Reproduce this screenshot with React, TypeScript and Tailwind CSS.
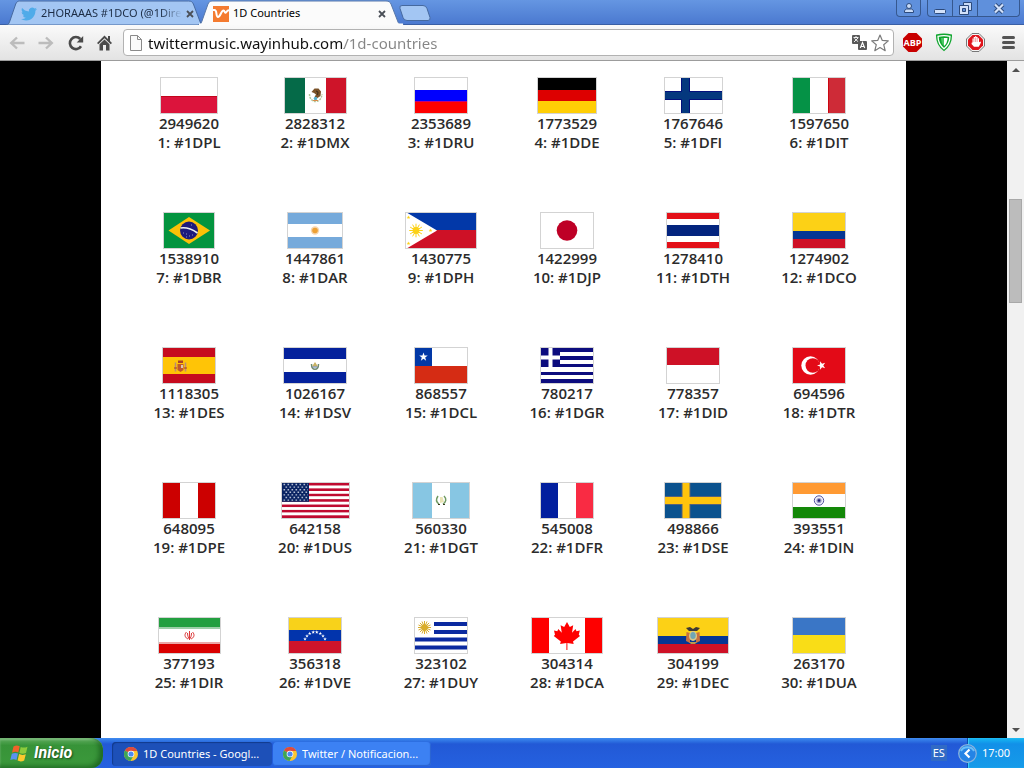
import { useState, type ReactNode } from "react"

interface Country {
  code: string
  votes: number
  width: number
  art: ReactNode
}

interface BandsProps {
  w: number
  colors: string[]
  sizes?: number[]
}

// Franjas horizontales
function Rows({ w, colors, sizes }: BandsProps) {
  const parts = sizes ?? colors.map(() => 35 / colors.length)
  let y = 0
  return (
    <>
      {colors.map((color, i) => {
        const top = y
        y += parts[i]
        return <rect key={i} x="0" y={top} width={w} height={parts[i]} fill={color} />
      })}
    </>
  )
}

// Franjas verticales
function Cols({ w, colors, sizes }: BandsProps) {
  const parts = sizes ?? colors.map(() => w / colors.length)
  let x = 0
  return (
    <>
      {colors.map((color, i) => {
        const left = x
        x += parts[i]
        return <rect key={i} x={left} y="0" width={parts[i]} height="35" fill={color} />
      })}
    </>
  )
}

function Star({ x, y, r, fill = "#fff", turn = 0 }: { x: number; y: number; r: number; fill?: string; turn?: number }) {
  const points = Array.from({ length: 10 }, (_, i) => {
    const radius = i % 2 === 0 ? r : r * 0.4
    const angle = (Math.PI * i) / 5 - Math.PI / 2 + turn
    return `${(x + radius * Math.cos(angle)).toFixed(2)},${(y + radius * Math.sin(angle)).toFixed(2)}`
  }).join(" ")
  return <polygon points={points} fill={fill} />
}

function Sun({ x, y, r, rays, fill }: { x: number; y: number; r: number; rays: number; fill: string }) {
  return (
    <g stroke={fill} fill={fill}>
      {Array.from({ length: rays }, (_, i) => {
        const a = (Math.PI * 2 * i) / rays
        return (
          <line
            key={i}
            x1={x}
            y1={y}
            x2={(x + r * Math.cos(a)).toFixed(2)}
            y2={(y + r * Math.sin(a)).toFixed(2)}
            strokeWidth="1"
          />
        )
      })}
      <circle cx={x} cy={y} r={r * 0.5} stroke="none" />
    </g>
  )
}

const countries: Country[] = [
  { code: "PL", votes: 2949620, width: 58, art: <><Rows w={56} colors={["#fff", "#dc143c"]} sizes={[18, 17]} /><rect y="18" width="56" height="1" fill="#c4051c" /></> },
  {
    code: "MX", votes: 2828312, width: 63,
    art: (
      <>
        <Cols w={61} colors={["#056a48", "#fff", "#ce1429"]} sizes={[20, 21, 20]} />
        <path d="M24.500 16c0 10 12 10 12.500 0" fill="none" stroke="#b3c79a" strokeWidth="1.500" strokeDasharray="2 1" />
        <path d="M26.500 14l3-3.500 4 0 2.500 3-.5 4.500-3 2-3-1 1.500-2.500-2-1.500z" fill="#7a5228" />
        <path d="M31 13l2 1-.5 3" stroke="#3c2a18" fill="none" />
        <circle cx="30.500" cy="20.500" r="1.800" fill="#58aecb" />
        <path d="M28 22.500h5" stroke="#d98a4a" />
      </>
    ),
  },
  { code: "RU", votes: 2353689, width: 54, art: <><Rows w={52} colors={["#fff", "#0000fe", "#fe0000"]} sizes={[12, 11, 12]} /><rect y="23" width="52" height="1" fill="#c0007c" /></> },
  { code: "DE", votes: 1773529, width: 60, art: <Rows w={58} colors={["#000", "#dd0000", "#ffce05"]} sizes={[12, 11, 12]} /> },
  {
    code: "FI", votes: 1767646, width: 59,
    art: (
      <>
        <rect width="57" height="35" fill="#fff" />
        <path d="M0 17.500h57M20.500 0v35" stroke="#03037c" strokeWidth="9" />
        <path d="M0 17.500h57M20.500 0v35" stroke="#04387e" strokeWidth="7.500" />
      </>
    ),
  },
  { code: "IT", votes: 1597650, width: 54, art: <><Cols w={52} colors={["#059246", "#fff", "#ce2b37"]} sizes={[17, 18, 17]} /><rect x="35" width="1" height="35" fill="#cc0610" /></> },
  {
    code: "BR", votes: 1538910, width: 52,
    art: (
      <>
        <rect width="50" height="35" fill="#03943f" />
        <path d="M4.500 17.500L25 4l21 13.500L25 31z" fill="#fcc107" />
        <circle cx="25" cy="17.500" r="9" fill="#1d1a7c" />
        <path d="M16.500 15c6-1 12 1.500 17 5" fill="none" stroke="#eef2f2" strokeWidth="1.600" />
        <path d="M19 20h1M22 21h1M25 23h1M28 22h1M22 24h1M27 12h1" stroke="#8f91bd" />
      </>
    ),
  },
  { code: "AR", votes: 1447861, width: 56, art: <><Rows w={54} colors={["#76aadb", "#fff", "#76aadb"]} sizes={[11, 13, 11]} /><circle cx="27" cy="17.500" r="4.200" fill="#f6d6b0" /><circle cx="27" cy="17.500" r="2.800" fill="#eda136" /></> },
  {
    code: "PH", votes: 1430775, width: 72,
    art: (
      <>
        <Rows w={70} colors={["#0238a8", "#ce1126"]} sizes={[17, 18]} />
        <path d="M0 0h1.500L31 17.500 1.500 35H0z" fill="#fff" />
        <Sun x={10} y={17.5} r={6.8} rays={12} fill="#fcd116" />
        <Star x={2.5} y={4.5} r={2} fill="#fcd116" />
        <Star x={2.5} y={30.5} r={2} fill="#fcd116" />
        <Star x={24.5} y={17.5} r={2} fill="#fcd116" />
      </>
    ),
  },
  { code: "JP", votes: 1422999, width: 54, art: <><rect width="52" height="35" fill="#fff" /><circle cx="26" cy="17.500" r="10.300" fill="#be0026" /></> },
  { code: "TH", votes: 1278410, width: 54, art: <Rows w={52} colors={["#e31018", "#fff", "#03247e", "#fff", "#e31018"]} sizes={[6, 6, 11, 6, 6]} /> },
  { code: "CO", votes: 1274902, width: 54, art: <Rows w={52} colors={["#fcd116", "#053693", "#ce1126"]} sizes={[18, 8, 9]} /> },
  {
    code: "ES", votes: 1118305, width: 54,
    art: (
      <>
        <Rows w={52} colors={["#c60b1e", "#ffc406", "#c60b1e"]} sizes={[9, 17, 9]} />
        <path d="M12.500 14.500v9M22.500 14.500v9" stroke="#b98a78" strokeWidth="1.500" />
        <path d="M14.500 16h6v6l-3 2-3-2z" fill="#c0572c" />
        <path d="M15 12.500h5V15h-5z" fill="#a8402b" />
        <path d="M18 17h2v3h-2z" fill="#d9c6b8" />
        <path d="M11 20h3M21 20h3" stroke="#ad3a22" />
      </>
    ),
  },
  {
    code: "SV", votes: 1026167, width: 64,
    art: (
      <>
        <Rows w={62} colors={["#04219c", "#fff", "#04219c"]} sizes={[11, 13, 11]} />
        <path d="M27.500 16c0 7 7 7 7 0" fill="none" stroke="#6f8c72" strokeWidth="1.500" />
        <path d="M31 14l3 4.500h-6z" fill="#c9b264" />
        <path d="M28.500 19h5" stroke="#5976a6" />
      </>
    ),
  },
  { code: "CL", votes: 868557, width: 54, art: <><Rows w={52} colors={["#fff", "#d52c14"]} sizes={[18, 17]} /><rect width="17" height="18" fill="#0238a6" /><Star x={8.5} y={9} r={4.5} /></> },
  {
    code: "GR", votes: 780217, width: 54,
    art: (
      <>
        <Rows w={52} colors={["#0c0c7e", "#fff", "#0c0c7e", "#fff", "#0c0c7e", "#fff", "#0c0c7e", "#fff", "#0c0c7e"]} sizes={[4, 4, 4, 4, 3, 5, 3, 4, 4]} />
        <rect width="19" height="19" fill="#0c0c7e" />
        <path d="M0 9.500h19M9.500 0v19" stroke="#fff" strokeWidth="4" />
      </>
    ),
  },
  { code: "ID", votes: 778357, width: 54, art: <Rows w={52} colors={["#ce1126", "#fff"]} sizes={[17, 18]} /> },
  {
    code: "TR", votes: 694596, width: 54,
    art: (
      <>
        <rect width="52" height="35" fill="#e30a17" />
        <circle cx="17.500" cy="17.500" r="9.200" fill="#fff" />
        <circle cx="19.800" cy="17.500" r="7.300" fill="#e30a17" />
        <Star x={28.5} y={17.5} r={4.5} turn={-Math.PI / 10} />
      </>
    ),
  },
  { code: "PE", votes: 648095, width: 54, art: <Cols w={52} colors={["#cc0000", "#fff", "#cc0000"]} sizes={[17, 18, 17]} /> },
  {
    code: "US", votes: 642158, width: 69,
    art: (
      <>
        <Rows w={67} colors={Array.from({ length: 13 }, (_, i) => (i % 2 === 0 ? "#bf0a30" : "#fff"))} />
        <rect width="27" height="18.800" fill="#0a2463" />
        {Array.from({ length: 7 }, (_, row) => (
          <path
            key={row}
            d={`M${row % 2 === 0 ? 1.5 : 3.5} ${1.5 + row * 2.6}H26`}
            stroke="#b4bdd3"
            strokeWidth="1.400"
            strokeDasharray="1.600 2.400"
          />
        ))}
      </>
    ),
  },
  {
    code: "GT", votes: 560330, width: 58,
    art: (
      <>
        <Cols w={56} colors={["#87c6e3", "#fff", "#87c6e3"]} sizes={[19, 18, 19]} />
        <path d="M25 13c-2 3-2 6 1 8M31 13c3 3 2 6-1 8" fill="none" stroke="#6f9a62" strokeWidth="1.500" />
        <path d="M27 14h2.500l1.500 5-4 1z" fill="#e9e3b4" />
        <path d="M25 21.500h2M30 21.500h2" stroke="#3a3a20" />
      </>
    ),
  },
  { code: "FR", votes: 545008, width: 54, art: <Cols w={52} colors={["#021f9e", "#fff", "#f92b43"]} sizes={[17, 18, 17]} /> },
  {
    code: "SE", votes: 498866, width: 58,
    art: (
      <>
        <rect width="56" height="35" fill="#0b528e" />
        <path d="M0 17.500h56M21 0v35" stroke="#55617a" strokeWidth="9" />
        <path d="M0 17.500h56M21 0v35" stroke="#ffc40c" strokeWidth="7" />
      </>
    ),
  },
  {
    code: "IN", votes: 393551, width: 54,
    art: (
      <>
        <Rows w={52} colors={["#ff9a33", "#fff", "#138808"]} sizes={[11, 13, 11]} />
        <circle cx="26" cy="17.500" r="4.700" fill="#eeeef8" stroke="#5656a0" />
        <circle cx="26" cy="17.500" r="2.600" fill="#9a9ac6" />
        <circle cx="26" cy="17.500" r="1.300" fill="#1c1c70" />
      </>
    ),
  },
  {
    code: "IR", votes: 377193, width: 63,
    art: (
      <>
        <Rows w={61} colors={["#239f40", "#9dcfa8", "#fff", "#eba7a7", "#da0000"]} sizes={[9, 2, 13, 2, 9]} />
        <path d="M27.500 14c-3 3-1 6 1.500 7M33.500 14c3 3 1 6-1.500 7M28.500 15c0 3 1 5 2 6.500 1-1.500 2-3.500 2-6.500M30.500 13v9" fill="none" stroke="#dc3a3a" strokeWidth="1" />
      </>
    ),
  },
  {
    code: "VE", votes: 356318, width: 54,
    art: (
      <>
        <Rows w={52} colors={["#f8d21a", "#0234ac", "#cf142b"]} sizes={[12, 11, 12]} />
        {[[16, 21], [18, 18], [20.7, 15.5], [24.2, 14.2], [27.8, 14.2], [31.3, 15.5], [34, 18], [36, 21]].map(([x, y]) => (
          <Star key={x} x={x} y={y} r={1.9} />
        ))}
      </>
    ),
  },
  {
    code: "UY", votes: 323102, width: 54,
    art: (
      <>
        <rect width="52" height="35" fill="#fff" />
        <path d="M19 6h33M19 14h33M0 21.500h52M0 29.500h52" stroke="#0b2aa0" strokeWidth="4" />
        <Sun x={9.5} y={9.5} r={6.5} rays={16} fill="#d9ad2c" />
      </>
    ),
  },
  {
    code: "CA", votes: 304314, width: 72,
    art: (
      <>
        <Cols w={70} colors={["#fe0000", "#fff", "#fe0000"]} sizes={[17, 36, 17]} />
        <path d="M35 4l2.800 5 3.400-1.700-1.200 7.500 3.500-3.800 1 2.200 3.300-.7-1 4.200 1.200 1.200-7 5.600.7 2.500-6.300-.9V32h-1v-6.900l-6.300.9.700-2.500-7-5.600 1.200-1.200-1-4.200 3.300.7 1-2.200 3.500 3.800-1.200-7.500L32.200 9z" fill="#fe0000" />
      </>
    ),
  },
  {
    code: "EC", votes: 304199, width: 72,
    art: (
      <>
        <Rows w={70} colors={["#fcd116", "#053693", "#ce1126"]} sizes={[18, 8, 9]} />
        <path d="M28 10l4-1 3 2 3-2 4 1-3 3h-8z" fill="#3d3934" />
        <path d="M28.500 14l3.500 1v10l-4-2zM41.500 14L38 15v10l4-2z" fill="#c9713f" />
        <ellipse cx="35" cy="18" rx="4" ry="5" fill="#d9c98a" />
        <ellipse cx="35" cy="17.500" rx="2.700" ry="3.600" fill="#6fa6b6" />
        <path d="M31 24h8l-2 2h-4z" fill="#b99b50" />
      </>
    ),
  },
  { code: "UA", votes: 263170, width: 54, art: <Rows w={52} colors={["#3a76c6", "#f9dd17"]} sizes={[17, 18]} /> },
]

function Flag({ code, width, children }: { code: string; width: number; children: ReactNode }) {
  return (
    <svg
      role="img"
      aria-label={code}
      width={width}
      height="37"
      viewBox={`0 0 ${width - 2} 35`}
      className="border border-[#d3d3d3]"
    >
      {children}
    </svg>
  )
}

function ChromeIcon() {
  return (
    <svg width="14" height="14" viewBox="0 0 14 14" className="shrink-0" aria-hidden="true">
      <circle cx="7" cy="7" r="7" fill="#fbc531" />
      <path d="M7 7L1 3.400A7 7 0 0 1 13.200 4H7z" fill="#dd4b3e" />
      <path d="M7 7L1 3.400A7 7 0 0 0 6.500 14L9.500 8.500z" fill="#3da558" />
      <circle cx="7" cy="7" r="3.300" fill="#fff" />
      <circle cx="7" cy="7" r="2.600" fill="#4a8af4" />
    </svg>
  )
}

function TwitterIcon() {
  return (
    <svg width="16" height="16" viewBox="0 0 24 24" className="shrink-0" aria-hidden="true">
      <path
        fill="#4fabe9"
        d="M23.950 4.570a10 10 0 0 1-2.820.77 4.960 4.960 0 0 0 2.160-2.720c-.95.550-2 .95-3.120 1.180a4.920 4.920 0 0 0-8.390 4.480C7.690 8.090 4.070 6.130 1.640 3.160a4.820 4.820 0 0 0-.67 2.480c0 1.710.87 3.210 2.190 4.100a4.900 4.900 0 0 1-2.230-.62v.06a4.920 4.920 0 0 0 3.950 4.830 5 5 0 0 1-2.210.08 4.940 4.940 0 0 0 4.600 3.420A9.870 9.870 0 0 1 0 19.540a13.990 13.990 0 0 0 7.550 2.210c9.060 0 14-7.500 14-13.980l-.02-.64a9.940 9.940 0 0 0 2.420-2.560z"
      />
    </svg>
  )
}

function WayinIcon() {
  return (
    <svg width="16" height="16" viewBox="0 0 16 16" className="shrink-0" aria-hidden="true">
      <rect width="16" height="16" fill="#f47b30" />
      <path
        d="M0 4h1.500C4.500 4 2.500 11 5 11c2.500 0 3-6.500 5.500-6.500C12 4.500 11.300 7 12.500 6.800 13.800 6.500 13.500 4.200 16 4.200"
        fill="none"
        stroke="#fff"
        strokeWidth="2"
      />
    </svg>
  )
}

interface BrowserTabProps {
  title: string
  icon: ReactNode
  active?: boolean
}

function BrowserTab({ title, icon, active }: BrowserTabProps) {
  return (
    <div className={`relative h-[25px] ${active ? "z-10 -ml-2 w-[206px]" : "w-[200px]"}`}>
      <svg viewBox="0 0 206 25" preserveAspectRatio="none" className="absolute inset-0 h-full w-full" aria-hidden="true">
        <path
          d="M0 25c2 0 3-1 4-4L10 4c1-2 2-3 4-3h174c3 0 4 1 5 3l7 18c1 2 2 3 6 3z"
          fill={active ? "#fbfbfb" : "#a3c6f3"}
          stroke={active ? "#5878ab" : "#45699f"}
          strokeWidth="1"
        />
        {active && <path d="M1 24.500h204" stroke="#fbfbfb" strokeWidth="2" />}
      </svg>
      <div className={`relative flex h-full items-center pt-[2px] ${active ? "pr-[18px] pl-[15px]" : "pr-[12px] pl-[15px]"}`}>
        {icon}
        <button
          role="tab"
          aria-selected={!!active}
          className={`ml-1 min-w-0 flex-1 text-left whitespace-nowrap ${
            active ? "text-black" : "[mask-image:linear-gradient(to_right,black_85%,transparent)] text-[#1c2c44]"
          }`}
        >
          {title}
        </button>
        <button aria-label={`Cerrar ${title}`} className="ml-1 shrink-0">
          <svg width="8" height="8" viewBox="0 0 8 8">
            <path d="M1 1l6 6M7 1L1 7" stroke="#4a4f57" strokeWidth="1.800" />
          </svg>
        </button>
      </div>
    </div>
  )
}

function WindowControls() {
  const box = "flex h-[17px] items-center justify-center border-[#36588f] bg-[#5f90dc]"
  return (
    <div className="flex gap-[6px] pr-1">
      <button aria-label="Usuario" className={`${box} w-[25px] rounded-b border-x border-b`}>
        <svg width="12" height="12" viewBox="0 0 12 12" fill="#c9dcf8" stroke="#2c4a7c">
          <path d="M1.500 10.500v-2l2-1.500h5l2 1.500v2z" />
          <circle cx="6" cy="4" r="2.500" />
        </svg>
      </button>
      <div className="flex">
        <button aria-label="Minimizar" className={`${box} w-[26px] rounded-bl border-x border-b`}>
          <svg width="12" height="12" viewBox="0 0 12 12">
            <rect x="0.500" y="7.500" width="11" height="4" rx="1" fill="#d3e2fa" stroke="#2c4a7c" />
          </svg>
        </button>
        <button aria-label="Restaurar" className={`${box} w-[25px] border-r border-b`}>
          <svg width="13" height="13" viewBox="0 0 13 13" stroke="#2c4a7c">
            <path d="M4.500.500h8v8h-8z" fill="#c9dcf8" />
            <path d="M.500 3.500h9v9h-9z" fill="#d3e2fa" />
            <path d="M3.500 6.500h3v3h-3z" fill="#5f90dc" />
          </svg>
        </button>
        <button aria-label="Cerrar" className={`${box} w-[42px] rounded-br border-r border-b`}>
          <svg width="12" height="11" viewBox="0 0 12 11">
            <path d="M2 1.500l8 8M10 1.500l-8 8" stroke="#2c4a7c" strokeWidth="4" />
            <path d="M2 1.500l8 8M10 1.500l-8 8" stroke="#d3e2fa" strokeWidth="2.200" />
          </svg>
        </button>
      </div>
    </div>
  )
}

function Toolbar() {
  const [url, setUrl] = useState("twittermusic.wayinhub.com/1d-countries")

  return (
    <div className="flex h-9 items-center border-b border-[#9c9c9c] bg-linear-to-b from-[#fafafa] to-[#e3e3e3] pr-2 pl-[9px]">
      <button aria-label="Atrás" className="mr-[13px]">
        <svg width="16" height="14" viewBox="0 0 16 14" fill="none" stroke="#bcbcbc" strokeWidth="2.400">
          <path d="M15.500 7H2M8 1.500L2.200 7 8 12.500" />
        </svg>
      </button>
      <button aria-label="Adelante" className="mr-[14px]">
        <svg width="16" height="14" viewBox="0 0 16 14" fill="none" stroke="#bcbcbc" strokeWidth="2.400">
          <path d="M.500 7H14M8 1.500L13.800 7 8 12.500" />
        </svg>
      </button>
      <button aria-label="Recargar" className="mr-[13px]">
        <svg width="16" height="16" viewBox="0 0 16 16">
          <path d="M13 11.200A6 6 0 1 1 12.300 4" fill="none" stroke="#4a4a4a" strokeWidth="2.600" />
          <path d="M15.200 1v6.500H8.700z" fill="#4a4a4a" />
        </svg>
      </button>
      <button aria-label="Página principal" className="mr-[11px]">
        <svg width="15" height="16" viewBox="0 0 15 16" fill="#4a4a4a">
          <path d="M7.500.500L0 8l1.300 1.300 6.200-6 6.200 6L15 8l-2-2V1h-2v3z" />
          <path d="M2.500 9.300l5-4.900 5 4.900V15.500H9V10H6v5.500H2.500z" />
        </svg>
      </button>

      {/* Barra de direcciones */}
      <form className="flex h-[27px] min-w-0 flex-1 items-center rounded-sm border border-[#b2b2b2] bg-white pr-1 pl-[6px]">
        <svg width="12" height="16" viewBox="0 0 12 16" className="shrink-0" aria-hidden="true">
          <path d="M.500.500h7l4 4v11H.500z" fill="#fafafa" stroke="#8a8a8a" />
          <path d="M7.500.500v4h4" fill="none" stroke="#8a8a8a" />
        </svg>
        <input
          aria-label="Dirección"
          value={url}
          onChange={(e) => setUrl(e.target.value)}
          className="ml-[6px] min-w-0 flex-1 bg-[linear-gradient(to_right,#111_196px,#858585_196px)] bg-clip-text font-['Noto_Sans','Open_Sans',sans-serif] text-[15px] leading-6 text-transparent caret-black outline-none"
        />
        <button type="button" aria-label="Traducir" className="mr-1">
          <svg width="15" height="15" viewBox="0 0 15 15">
            <rect width="8" height="9" rx="1" fill="#5a5a5a" />
            <path d="M1.500 2.500h5M4 1v1.500M2 7l4-4M2.500 3.500l4 3.500" stroke="#fff" fill="none" strokeWidth=".9" />
            <rect x="6" y="6" width="9" height="9" rx="1" fill="#5a5a5a" />
            <path d="M8.300 13l2.200-5.500 2.200 5.500M9 11.500h3" stroke="#fff" fill="none" strokeWidth="1.100" />
          </svg>
        </button>
        <button type="button" aria-label="Añadir a marcadores">
          <svg width="18" height="18" viewBox="0 0 18 18">
            <path d="M9 1l2.300 5.400 6 .5-4.600 3.800 1.500 6L9 13.500l-5.200 3.200 1.500-6L.700 6.900l6-.5z" fill="#fff" stroke="#7c7c7c" strokeWidth="1.200" strokeLinejoin="round" />
          </svg>
        </button>
      </form>

      {/* Extensiones */}
      <div className="ml-[9px] flex items-center gap-[13px]">
        <button aria-label="Adblock Plus" className="flex h-[19px] w-[19px] items-center justify-center bg-[#c80000] font-['Open_Sans',sans-serif] text-[9px] leading-none font-bold text-white [clip-path:polygon(29%_0,71%_0,100%_29%,100%_71%,71%_100%,29%_100%,0_71%,0_29%)]">
          ABP
        </button>
        <button aria-label="Protección web">
          <svg width="18" height="19" viewBox="0 0 18 19">
            <path d="M1 1.500Q9-.500 17 1.500 17.500 12 9 18.200.500 12 1 1.500z" fill="#0fa52e" />
            <path d="M3 3.300q6-1.500 12 0Q15 11 9 15.800 3 11 3 3.300z" fill="#0fa52e" stroke="#fff" strokeWidth="1.300" />
            <path d="M9 5h3.500q0 5-3.500 8z" fill="#fff" />
            <path d="M9 5H6q0 5 3 8z" fill="#4bc763" />
          </svg>
        </button>
        <button aria-label="AdBlock">
          <svg width="19" height="19" viewBox="0 0 19 19">
            <path d="M6 .500h7L18.500 6v7L13 18.500H6L.500 13V6z" fill="#f4f4f4" stroke="#777" />
            <path d="M6.500 2h6L17 6.500v6L12.500 17h-6L2 12.500v-6z" fill="#e0141c" />
            <path d="M6.500 9.500V5.500h1.200V4h1.300V3.300h1.300V4h1.300v1.200H13v4l1.500-.7.500 1-2.200 4.200H8L5.500 11l.3-1.500z" fill="#fff" />
            <path d="M7.900 5v4M9.600 4.500V9M11.200 5v4" stroke="#e0141c" strokeWidth=".4" />
          </svg>
        </button>
        <button aria-label="Menú" className="ml-1 flex flex-col gap-[2px] pr-px">
          <span className="h-[3px] w-[13px] rounded-sm bg-[#545454]" />
          <span className="h-[3px] w-[13px] rounded-sm bg-[#545454]" />
          <span className="h-[3px] w-[13px] rounded-sm bg-[#545454]" />
        </button>
      </div>
    </div>
  )
}

function ScrollBar() {
  return (
    <div className="flex w-[17px] shrink-0 flex-col items-center bg-[#f1f1f1]">
      <button aria-label="Subir" className="flex h-[17px] w-full items-center justify-center">
        <svg width="8" height="4" viewBox="0 0 8 4"><path d="M0 4l4-4 4 4z" fill="#505050" /></svg>
      </button>
      <div className="flex-[121]" />
      <div className="w-[13px] flex-[103] border border-[#a8a8a8] bg-[#bcbcbc]" />
      <div className="flex-[419]" />
      <button aria-label="Bajar" className="flex h-[17px] w-full items-center justify-center">
        <svg width="8" height="4" viewBox="0 0 8 4"><path d="M0 0l4 4 4-4z" fill="#505050" /></svg>
      </button>
    </div>
  )
}

function TaskBar() {
  return (
    <footer className="flex h-[30px] shrink-0 items-stretch bg-linear-to-b from-[#3f8cf0] via-[#2259d6] via-20% to-[#2561e0] text-white">
      <button className="flex w-[103px] items-center gap-[5px] rounded-r-xl bg-linear-to-b from-[#5fae5f] via-[#379338] via-25% to-[#3c9a3c] pl-[10px] shadow-[inset_-4px_-2px_5px_#1f6b23,inset_0_2px_2px_#86c486]">
        <svg width="19" height="19" viewBox="0 0 19 19" aria-hidden="true">
          <path d="M3.500 2.500q3-2 6.200-.3L8.300 8.500Q5.500 7 2 8.700z" fill="#f0622a" />
          <path d="M10.700 2.900q3 1.500 6.800-.2L16 9q-3.500 1.500-6.600 0z" fill="#8ccb3c" />
          <path d="M1.800 9.800q3.500-1.700 6.200-.2L6.500 16q-3-1.500-6.200.1z" fill="#5a92f0" />
          <path d="M9.100 10.100q3 1.500 6.700.1L14.200 16.500q-3.500 1.700-6.600.1z" fill="#fbc92e" />
        </svg>
        <span className="font-['Roboto',sans-serif] text-base font-bold italic [text-shadow:1px_1px_2px_#1a4a1a]">Inicio</span>
      </button>
      <div className="ml-[9px] flex min-w-0 flex-1 items-center gap-px pt-[2px]">
        <button className="flex h-6 w-[160px] items-center gap-[5px] rounded-sm bg-[#1d50b8] pl-[12px] shadow-[inset_1px_1px_1px_#123a8c]">
          <ChromeIcon />
          <span className="truncate">1D Countries - Googl...</span>
        </button>
        <button className="flex h-6 w-[158px] items-center gap-[5px] rounded-sm bg-[#3c81f3] pl-[10px] shadow-[inset_-1px_-1px_1px_#2a62cf]">
          <ChromeIcon />
          <span className="truncate">Twitter / Notificacion...</span>
        </button>
      </div>
      <button className="mr-[20px] self-center bg-[#316ac5] px-[2px] leading-4">ES</button>
      <div className="flex items-center border-l border-[#0d4fae] bg-linear-to-b from-[#19b9f3] via-[#1290e8] via-20% to-[#169be9] pr-[14px] shadow-[inset_1px_0_1px_#3fd0fb]">
        <button aria-label="Mostrar iconos ocultos" className="-ml-[10px] mr-[5px]">
          <svg width="19" height="19" viewBox="0 0 19 19">
            <circle cx="9.500" cy="9.500" r="8.800" fill="#2484e6" stroke="#8cb4dc" strokeWidth="1.200" />
            <path d="M3 7a7 6 0 0 1 13 0" fill="none" stroke="#6bc0f8" strokeWidth="2" />
            <path d="M11.500 5.500l-4 4 4 4" fill="none" stroke="#fff" strokeWidth="2.200" />
          </svg>
        </button>
        <time dateTime="17:00">17:00</time>
      </div>
    </footer>
  )
}

export default function App() {
  return (
    <div className="flex h-screen flex-col overflow-hidden bg-black font-['Noto_Sans','Open_Sans',sans-serif] text-[11px]">
      <header className="shrink-0">
        <div className="flex h-[25px] items-start bg-linear-to-b from-[#6596e2] to-[#4a78cf] shadow-[inset_0_-1px_0_#3a5fa5]">
          <div role="tablist" className="flex flex-1 pl-[6px]">
            <BrowserTab title="2HORAAAS #1DCO (@1Dire" icon={<TwitterIcon />} />
            <BrowserTab title="1D Countries" icon={<WayinIcon />} active />
            <button aria-label="Nueva pestaña" className="mt-[5px] -ml-[5px] self-start">
              <svg width="32" height="16" viewBox="0 0 32 16">
                <path d="M3 .500h21q3 0 4 3l3 9q.5 3-2 3H8q-3 0-4-3l-3-9Q0 .500 3 .500z" fill="#a3c6f3" stroke="#45699f" />
              </svg>
            </button>
          </div>
          <WindowControls />
        </div>
        <Toolbar />
      </header>

      <div className="flex min-h-0 flex-1">
        <main className="min-w-0 flex-1 overflow-hidden">
          <div className="mx-auto h-full w-full max-w-[805px] overflow-hidden bg-white pt-4 pr-6 pl-[25px]">
            <ol className="grid grid-cols-6">
              {countries.map((country, index) => (
                <li
                  key={country.code}
                  className="flex h-[135px] flex-col items-center font-['Open_Sans','Noto_Sans',sans-serif] text-[15px] leading-[19px] font-semibold text-[#2b2b2b]"
                >
                  <Flag code={country.code} width={country.width}>
                    {country.art}
                  </Flag>
                  <span>{country.votes}</span>
                  <span>
                    {index + 1}: #1D{country.code}
                  </span>
                </li>
              ))}
            </ol>
          </div>
        </main>
        <ScrollBar />
      </div>

      <TaskBar />
    </div>
  )
}
